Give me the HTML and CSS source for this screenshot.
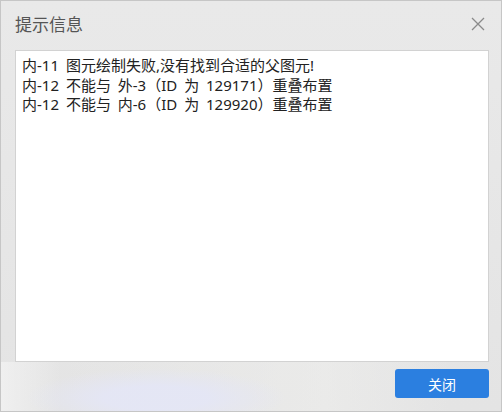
FILE: index.html
```html
<!DOCTYPE html>
<html lang="zh-CN">
<head>
  <meta charset="UTF-8">
  <title>提示信息</title>
  <link rel="stylesheet" href="styles.css">
</head>
<body>
  <div class="dialog">
    <div class="dialog-header">
      <span class="dialog-title">提示信息</span>
      <button class="dialog-close" type="button" aria-label="关闭">
        <svg width="14" height="14" viewBox="0 0 14 14">
          <path d="M1 1 L13 13 M13 1 L1 13" stroke="#8a8a8a" stroke-width="1.3" fill="none"/>
        </svg>
      </button>
    </div>

    <div class="message-box">
      <div>内-11 图元绘制失败,没有找到合适的父图元!</div>
      <div>内-12 不能与 外-3（ID 为 129171）重叠布置</div>
      <div>内-12 不能与 内-6（ID 为 129920）重叠布置</div>
    </div>

    <div class="dialog-footer">
      <button class="btn-primary" type="button">关闭</button>
    </div>
  </div>
</body>
</html>
```

FILE: styles.css
```css
* {
  box-sizing: border-box;
}

body {
  margin: 0;
  font-family: "Noto Sans", "Noto Sans CJK SC", sans-serif;
  color: #222;
}

.dialog {
  width: 502px;
  height: 412px;
  display: flex;
  flex-direction: column;
  border: 1px solid #c6c6c6;
  background-color: #e8e8e8;
  background-image: linear-gradient(180deg, #e9e9e9 0%, #e4e4e4 100%);
}

.dialog-header {
  height: 49px;
  flex: none;
  display: flex;
  align-items: center;
  justify-content: space-between;
  padding: 0 14px 4px 14px;
}

.dialog-title {
  font-size: 17px;
  color: #555;
}

.dialog-close {
  width: 18px;
  height: 18px;
  padding: 2px;
  border: none;
  background: none;
  display: flex;
  align-items: center;
  justify-content: center;
  cursor: pointer;
}

.message-box {
  height: 312px;
  flex: none;
  margin: 0 12px 0 14px;
  padding: 5px 6px;
  background: #fff;
  border: 1px solid #d2d2d2;
  font-size: 15px;
  line-height: 19.5px;
  word-spacing: 3px;
  color: #222;
}

.dialog-footer {
  flex: 1;
  display: flex;
  justify-content: flex-end;
  align-items: flex-start;
  padding: 7px 12px 0 0;
  background-image:
    radial-gradient(ellipse 130px 30px at 155px 36px, rgba(228, 230, 246, 0.9) 40%, rgba(228, 230, 246, 0) 100%),
    linear-gradient(90deg, rgba(244, 244, 244, 0.7), rgba(232, 232, 232, 0) 12%, rgba(240, 240, 238, 0.5) 65%, rgba(232, 232, 232, 0) 90%);
}

.btn-primary {
  width: 94px;
  height: 29px;
  border: none;
  border-radius: 3px;
  background: #2b7fe0;
  color: #fff;
  font-family: inherit;
  font-size: 14px;
  cursor: pointer;
}

.btn-primary:hover {
  background: #1f6fcf;
}
```
